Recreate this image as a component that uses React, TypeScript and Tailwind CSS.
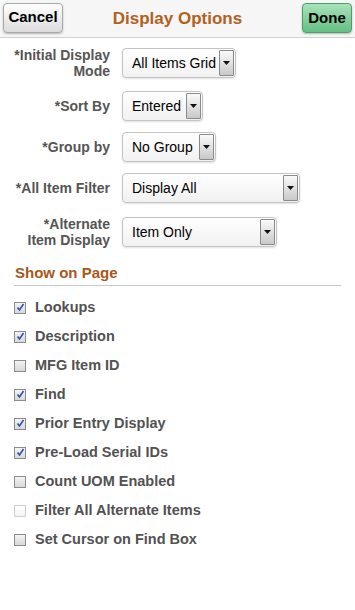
import React from "react";

type SelectProps = {
  value: string;
  width: string;
};

const FakeSelect: React.FC<SelectProps> = ({value, width}) => {
  return (
    <div
      className={`${width} h-[30px] flex items-stretch rounded-[4px] border border-[#c4c4c4] bg-gradient-to-b from-white to-[#f1f1f1] shadow-[0_1px_2px_rgba(0,0,0,0.12)] overflow-hidden`}
    >
      <span className="flex-1 flex items-center pl-[9px] text-[14px] text-black whitespace-nowrap">{value}</span>
      <span className="w-[15px] my-[1px] mr-[1px] flex items-center justify-center border border-[#8a8a8a] rounded-[1px] bg-gradient-to-b from-[#fafafa] to-[#c9c9c9]">
        <svg width="7" height="4" viewBox="0 0 7 4">
          <path d="M0 0h7L3.5 4z" fill="#111" />
        </svg>
      </span>
    </div>
  );
};

type CheckProps = {
  label: string;
  checked?: boolean;
  disabled?: boolean;
};

const CheckRow: React.FC<CheckProps> = ({label, checked, disabled}) => {
  return (
    <div className="h-[29px] flex items-center gap-[9px]">
      <span
        className={`w-[12px] h-[12px] flex items-center justify-center border ${
          disabled ? "border-[#cfcfcf] from-white to-[#f4f4f4]" : "border-[#8c8c8c] from-[#f4f4f4] to-[#d8d8d8]"
        } bg-gradient-to-b`}
      >
        {checked && (
          <svg width="9" height="9" viewBox="0 0 9 9">
            <path d="M1.5 4.5l2 2.5L7.5 1" fill="none" stroke="#2f4fa8" strokeWidth="1.6" />
          </svg>
        )}
      </span>
      <span className="text-[14.5px] font-bold text-[#525252]">{label}</span>
    </div>
  );
};

const rows = [
  {label: ["*Initial Display", "Mode"], value: "All Items Grid", width: "w-[114px]", mt: "mt-0"},
  {label: ["*Sort By"], value: "Entered", width: "w-[81px]", mt: "mt-[13px]"},
  {label: ["*Group by"], value: "No Group", width: "w-[94px]", mt: "mt-[11px]"},
  {label: ["*All Item Filter"], value: "Display All", width: "w-[178px]", mt: "mt-[11px]"},
  {label: ["*Alternate", "Item Display"], value: "Item Only", width: "w-[155px]", mt: "mt-[14px]"},
];

const checks: CheckProps[] = [
  {label: "Lookups", checked: true},
  {label: "Description", checked: true},
  {label: "MFG Item ID"},
  {label: "Find", checked: true},
  {label: "Prior Entry Display", checked: true},
  {label: "Pre-Load Serial IDs", checked: true},
  {label: "Count UOM Enabled"},
  {label: "Filter All Alternate Items", disabled: true},
  {label: "Set Cursor on Find Box"},
];

export default function App() {
  return (
    <div className="w-[355px] h-[610px] bg-white font-[family-name:'Liberation_Sans',Arial,sans-serif]">
      <div className="h-[38px] grid grid-cols-[1fr_auto_1fr] items-center px-[3px] bg-[#f6f6f6] border-b border-[#cfcfcf]">
        <div>
          <button className="w-[60px] h-[30px] -mt-[2px] rounded-[4px] border border-[#a9a9a9] bg-gradient-to-b from-white to-[#dcdcdc] shadow-[0_1px_2px_rgba(0,0,0,0.25)] text-[15px] font-bold text-black">
            Cancel
          </button>
        </div>
        <h1 className="text-[17px] font-bold text-[#b3611c]">Display Options</h1>
        <div className="flex justify-end">
          <button className="w-[50px] h-[30px] -mt-[1px] rounded-[4px] border border-[#4f9d69] bg-gradient-to-b from-[#a8e2bb] to-[#62c082] shadow-[0_1px_2px_rgba(0,0,0,0.25)] text-[15px] font-bold text-black">
            Done
          </button>
        </div>
      </div>

      <div className="pt-[10px]">
        {rows.map((row) => (
          <div key={row.value} className={`${row.mt} h-[30px] flex items-center gap-[12px]`}>
            <div className="w-[110px] text-right text-[14px] leading-[16px] font-bold text-[#555]">
              {row.label.map((l) => (
                <div key={l}>{l}</div>
              ))}
            </div>
            <FakeSelect value={row.value} width={row.width} />
          </div>
        ))}
      </div>

      <div className="mx-[14px] mt-[17px] pb-[3px] border-b border-[#c8c8c8]">
        <h2 className="pl-[1px] text-[15px] leading-[18px] font-bold text-[#a9571a]">Show on Page</h2>
      </div>

      <div className="mt-[7px] px-[14px]">
        {checks.map((c) => (
          <CheckRow key={c.label} {...c} />
        ))}
      </div>
    </div>
  );
}
